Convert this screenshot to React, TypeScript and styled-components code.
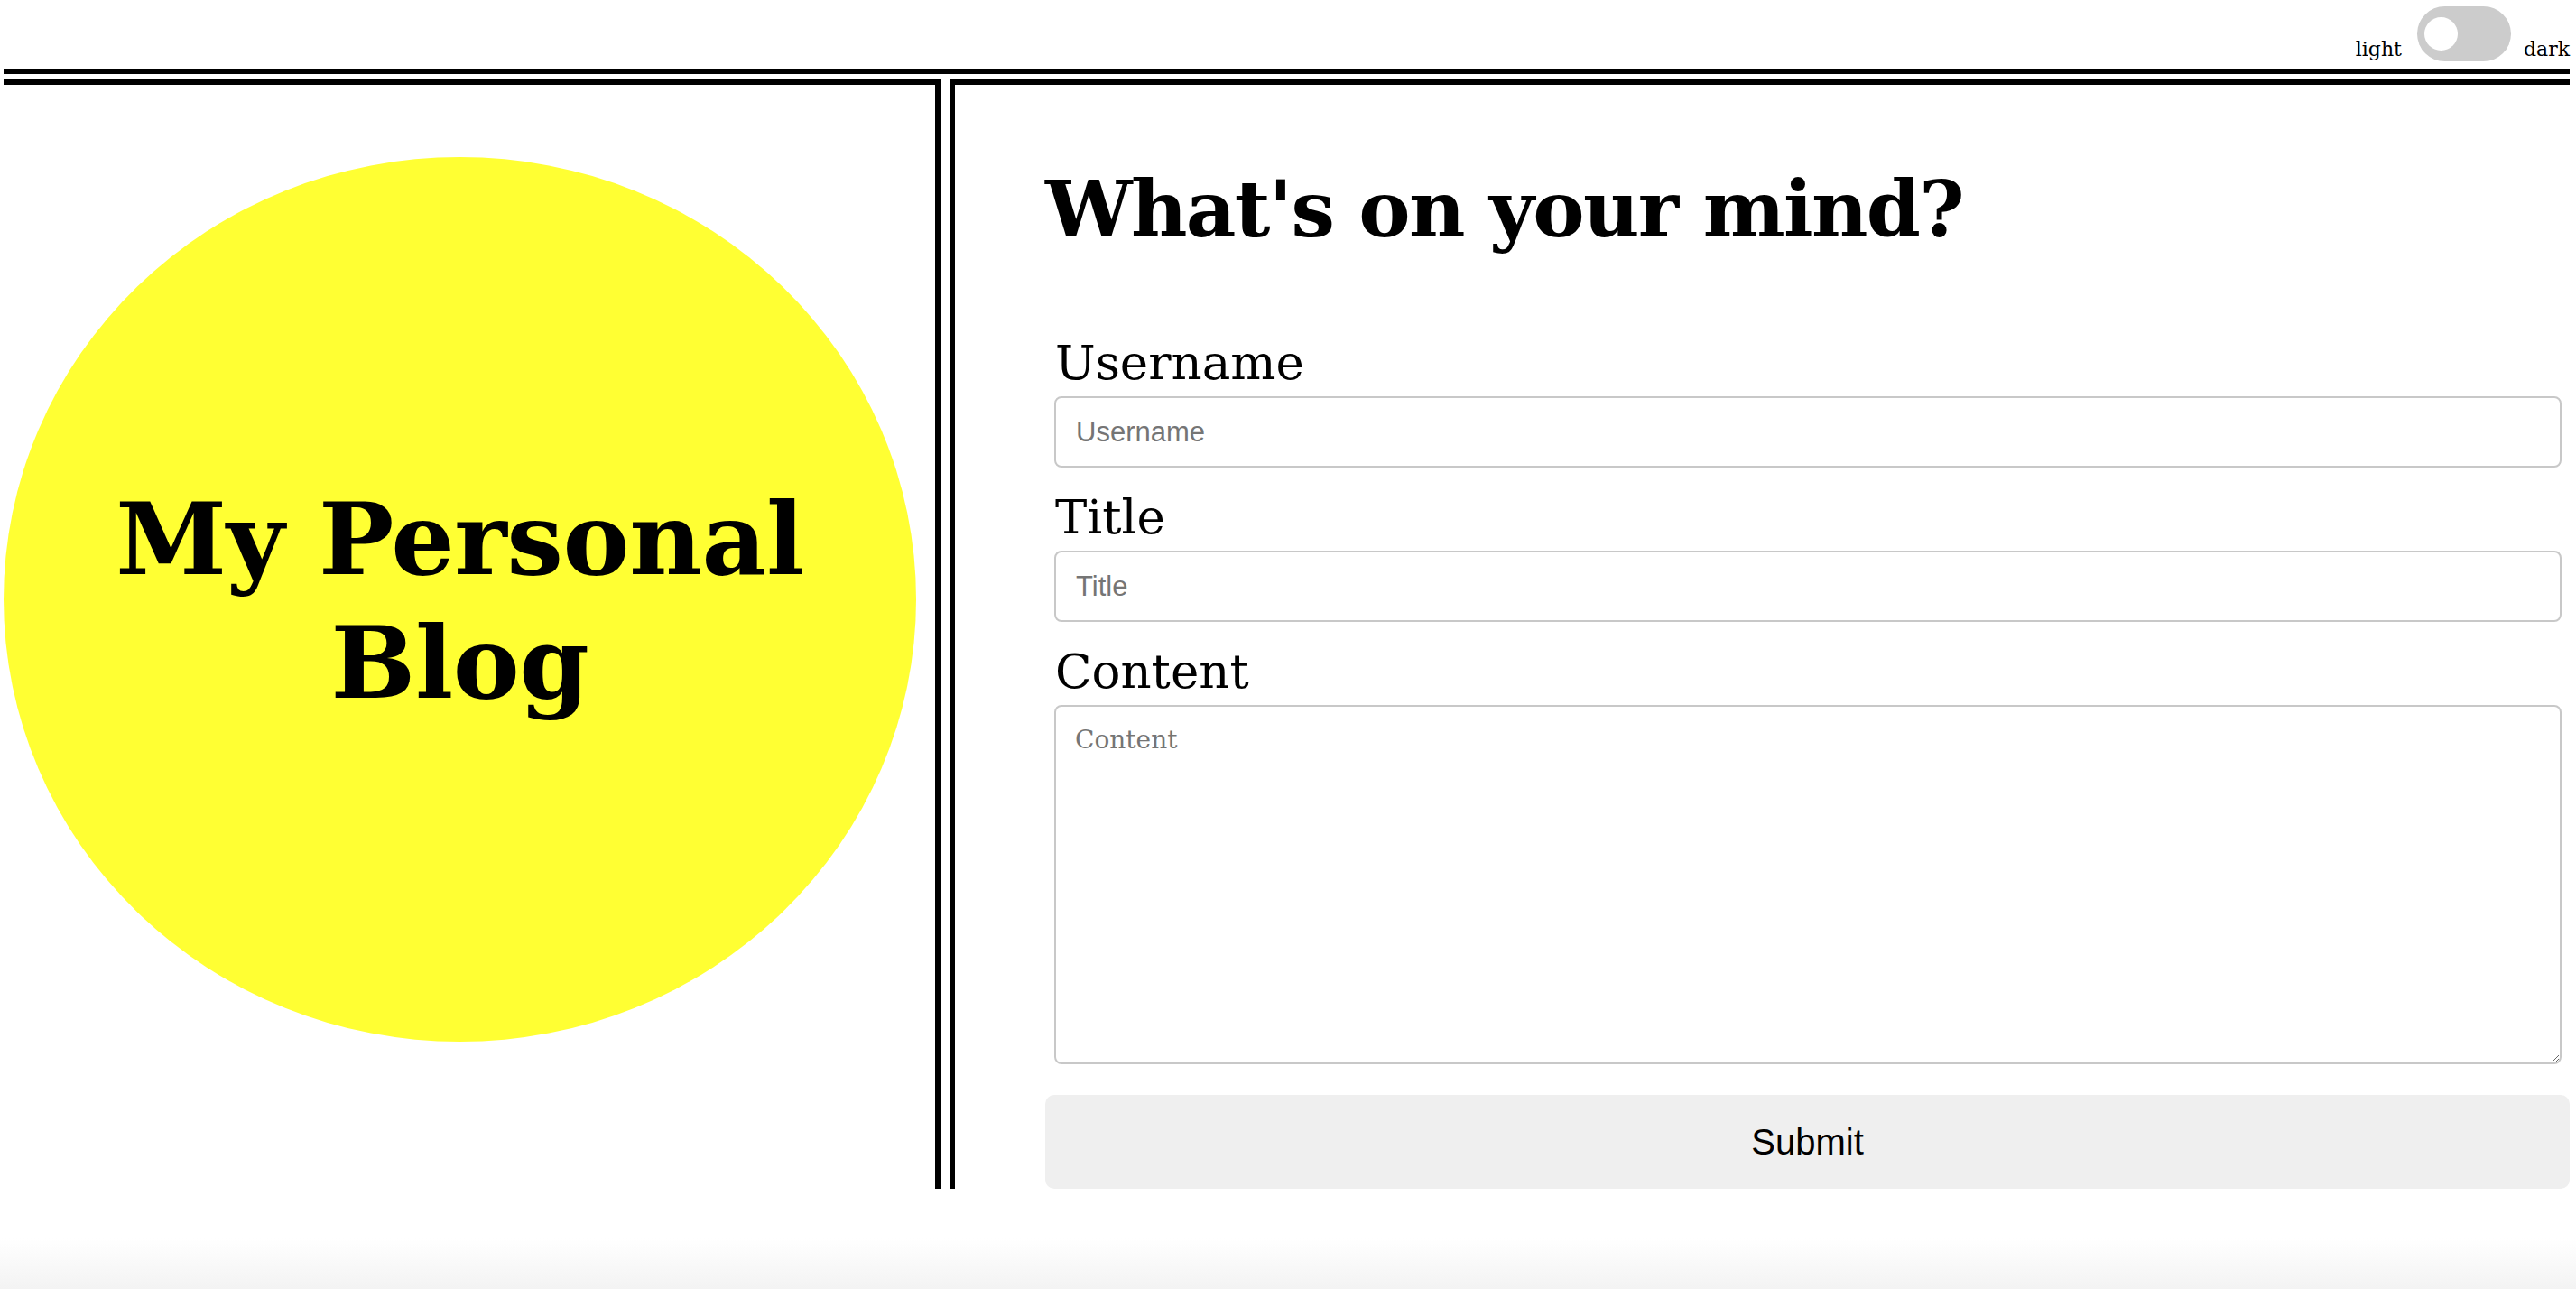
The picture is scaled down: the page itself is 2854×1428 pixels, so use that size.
import React, { useState } from "react";
import styled, { createGlobalStyle } from "styled-components";

const GlobalStyle = createGlobalStyle`
  html, body {
    margin: 0;
    padding: 0;
  }
  body {
    min-height: 100vh;
    background: linear-gradient(to bottom, #ffffff calc(100% - 56px), #f3f3f3 100%);
    font-family: "DejaVu Serif", Georgia, serif;
    color: #000;
  }
`;

const Page = styled.div`
  padding: 0 7px 0 4px;
`;

const Header = styled.header`
  display: flex;
  justify-content: flex-end;
  align-items: flex-end;
  height: 68px;
  padding-bottom: 8px;
  border-bottom: 6px solid #000;
`;

const ModeLabel = styled.span`
  font-family: "DejaVu Serif", Georgia, serif;
  font-size: 22px;
  line-height: 22px;
  padding-bottom: 2px;
`;

const Switch = styled.button<{ $on: boolean }>`
  position: relative;
  width: 104px;
  height: 61px;
  margin: 0 14px 0 17px;
  padding: 0;
  border: none;
  border-radius: 31px;
  background: ${(p) => (p.$on ? "#2196f3" : "#cccccc")};
  cursor: pointer;

  &::before {
    content: "";
    position: absolute;
    top: 12px;
    left: ${(p) => (p.$on ? "60px" : "8px")};
    width: 37px;
    height: 37px;
    border-radius: 50%;
    background: #fff;
    transition: left 0.2s;
  }
`;

const Main = styled.main`
  display: flex;
  gap: 10px;
  margin-top: 6px;
`;

const LeftPanel = styled.section`
  width: 1038px;
  flex-shrink: 0;
  box-sizing: border-box;
  border-top: 6px solid #000;
  border-right: 6px solid #000;
`;

const Circle = styled.div`
  width: 1011px;
  height: 980px;
  margin-top: 80px;
  border-radius: 50%;
  background: #ffff33;
  display: flex;
  flex-direction: column;
  align-items: center;
  justify-content: center;
  box-sizing: border-box;
  padding-top: 4px;
`;

const BlogTitle = styled.h1`
  margin: 0;
  font-family: "DejaVu Serif", Georgia, serif;
  font-weight: 700;
  font-size: 111px;
  line-height: 137px;
  letter-spacing: -0.4px;
  text-align: center;
  white-space: nowrap;
`;

const RightPanel = styled.section`
  flex: 1;
  box-sizing: border-box;
  border-top: 6px solid #000;
  border-left: 6px solid #000;
  padding-left: 100px;
`;

const Heading = styled.h2`
  margin: 88px 0 0;
  font-family: "DejaVu Serif", Georgia, serif;
  font-weight: 700;
  font-size: 86px;
  line-height: 100px;
  letter-spacing: -1.7px;
`;

const Form = styled.form`
  display: flex;
  flex-direction: column;
  margin-top: 88px;
`;

const Label = styled.label<{ $first?: boolean }>`
  margin: ${(p) => (p.$first ? "0" : "23px")} 9px 5px 11px;
  font-family: "DejaVu Serif", Georgia, serif;
  font-size: 53px;
  line-height: 64px;
`;

const Input = styled.input`
  margin: 0 9px 0 10px;
  height: 79px;
  box-sizing: border-box;
  padding: 0 22px;
  border: 2px solid #c8c8c8;
  border-radius: 8px;
  font-family: "Liberation Sans", Arial, sans-serif;
  font-size: 31px;
  background: #fff;

  &::placeholder {
    color: #757575;
  }
`;

const TextArea = styled.textarea`
  margin: 0 9px 0 10px;
  height: 398px;
  box-sizing: border-box;
  padding: 20px 21px;
  border: 2px solid #c8c8c8;
  border-radius: 8px;
  font-family: "DejaVu Serif", Georgia, serif;
  font-size: 28px;
  background: #fff;

  &::placeholder {
    color: #757575;
  }
`;

const SubmitButton = styled.button`
  margin-top: 34px;
  height: 104px;
  border: none;
  border-radius: 10px;
  background: #efefef;
  color: #000;
  font-family: "Liberation Sans", Arial, sans-serif;
  font-size: 40px;
  cursor: pointer;
`;

export default function App() {
  const [dark, setDark] = useState(false);

  return (
    <Page>
      <GlobalStyle />
      <Header>
        <ModeLabel>light</ModeLabel>
        <Switch
          type="button"
          aria-label="toggle theme"
          $on={dark}
          onClick={() => setDark(!dark)}
        />
        <ModeLabel>dark</ModeLabel>
      </Header>
      <Main>
        <LeftPanel>
          <Circle>
            <BlogTitle>
              My Personal
              <br />
              Blog
            </BlogTitle>
          </Circle>
        </LeftPanel>
        <RightPanel>
          <Heading>What's on your mind?</Heading>
          <Form onSubmit={(e) => e.preventDefault()}>
            <Label $first htmlFor="username">
              Username
            </Label>
            <Input id="username" placeholder="Username" />
            <Label htmlFor="title">Title</Label>
            <Input id="title" placeholder="Title" />
            <Label htmlFor="content">Content</Label>
            <TextArea id="content" placeholder="Content" />
            <SubmitButton type="submit">Submit</SubmitButton>
          </Form>
        </RightPanel>
      </Main>
    </Page>
  );
}
